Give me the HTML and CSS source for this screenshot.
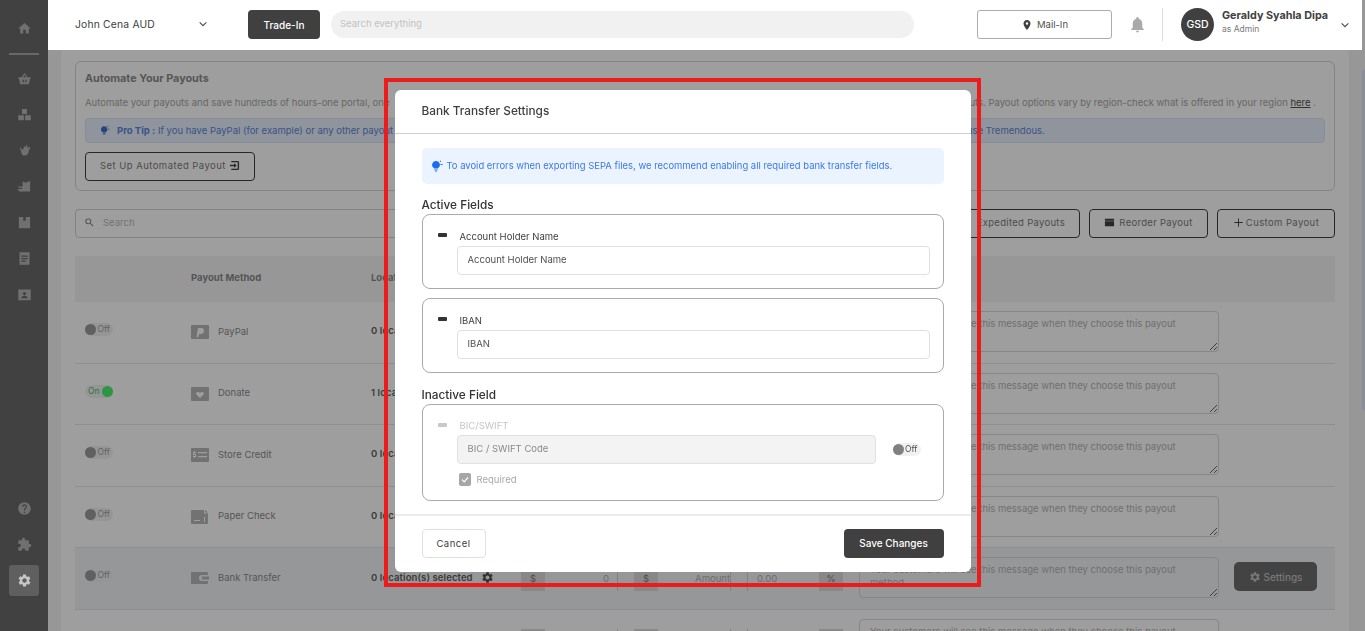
FILE: index.html
```html
<!DOCTYPE html>
<html lang="en">
<head>
    <meta charset="UTF-8">
    <meta name="viewport" content="width=device-width, initial-scale=1.0">
    <title>Payout Settings</title>
    <link rel="stylesheet" href="styles.css">
</head>
<body>
    <svg class="sprite" xmlns="http://www.w3.org/2000/svg">
        <symbol id="i-home" viewBox="0 0 24 24"><path d="M10 20v-6h4v6h5v-8h3L12 3 2 12h3v8z"/></symbol>
        <symbol id="i-basket" viewBox="0 0 24 24"><path d="M12 3 7 10H2v2h1l2 9h14l2-9h1v-2h-5zm0 3 2.500 4h-5zm-3 8h2v4H9zm4 0h2v4h-2z" fill-rule="evenodd"/></symbol>
        <symbol id="i-boxes" viewBox="0 0 24 24"><path d="M8 3h8v8H8zM2 13h9v8H2zM13 13h9v8h-9z"/></symbol>
        <symbol id="i-hand" viewBox="0 0 24 24"><path d="M4 6l5 5 3-6 2 1 1-3 2 1-1 4 4-2 1 2-2 4c0 5-3 8-7 8-3 0-5-2-5-5z"/></symbol>
        <symbol id="i-stock" viewBox="0 0 24 24"><path d="M9 4l5 2 7-3v17H3l2-4h3l-1-4h2zM2 12h5v2H2zM1 16h4v2H1z"/></symbol>
        <symbol id="i-box" viewBox="0 0 24 24"><path d="M3 3h7v6h4V3h7v18H3z"/></symbol>
        <symbol id="i-receipt" viewBox="0 0 24 24"><path d="M4 2h16v20H4zm3 5v2h10V7zm0 4v2h10v-2zm0 4v2h7v-2z" fill-rule="evenodd"/></symbol>
        <symbol id="i-id" viewBox="0 0 24 24"><path d="M2 4h20v17H2zm10 4a2.500 2.500 0 1 0 0 5 2.500 2.500 0 0 0 0-5zm-5 10h10c0-2-2-4-5-4s-5 2-5 4z" fill-rule="evenodd"/></symbol>
        <symbol id="i-help" viewBox="0 0 24 24"><path d="M12 2C6.48 2 2 6.48 2 12s4.48 10 10 10 10-4.48 10-10S17.52 2 12 2zm1 17h-2v-2h2v2zm2.07-7.75l-.9.92C13.45 12.9 13 13.5 13 15h-2v-.5c0-1.1.45-2.1 1.17-2.83l1.24-1.26c.37-.36.59-.86.59-1.41 0-1.1-.9-2-2-2s-2 .9-2 2H8c0-2.21 1.79-4 4-4s4 1.79 4 4c0 .88-.36 1.68-.93 2.25z"/></symbol>
        <symbol id="i-puzzle" viewBox="0 0 24 24"><path d="M20.5 11H19V7c0-1.1-.9-2-2-2h-4V3.5C13 2.12 11.88 1 10.5 1S8 2.12 8 3.5V5H4c-1.1 0-1.99.9-1.99 2v3.8H3.5c1.49 0 2.7 1.21 2.7 2.7s-1.21 2.7-2.7 2.7H2V20c0 1.1.9 2 2 2h3.8v-1.5c0-1.49 1.21-2.7 2.7-2.7 1.49 0 2.7 1.21 2.7 2.7V22H17c1.1 0 2-.9 2-2v-4h1.5c1.38 0 2.5-1.12 2.5-2.5S21.88 11 20.5 11z"/></symbol>
        <symbol id="i-gear" viewBox="0 0 24 24"><path d="M19.14 12.94c.04-.3.06-.61.06-.94 0-.32-.02-.64-.07-.94l2.03-1.58c.18-.14.23-.41.12-.61l-1.92-3.32c-.12-.22-.37-.29-.59-.22l-2.39.96c-.5-.38-1.03-.7-1.62-.94l-.36-2.54c-.04-.24-.24-.41-.48-.41h-3.84c-.24 0-.43.17-.47.41l-.36 2.54c-.59.24-1.13.57-1.62.94l-2.39-.96c-.22-.08-.47 0-.59.22L2.74 8.87c-.12.21-.08.47.12.61l2.03 1.58c-.05.3-.09.63-.09.94s.02.64.07.94l-2.03 1.58c-.18.14-.23.41-.12.61l1.92 3.32c.12.22.37.29.59.22l2.39-.96c.5.38 1.03.7 1.62.94l.36 2.54c.05.24.24.41.48.41h3.84c.24 0 .44-.17.47-.41l.36-2.54c.59-.24 1.13-.56 1.62-.94l2.39.96c.22.08.47 0 .59-.22l1.92-3.32c.12-.22.07-.47-.12-.61l-2.01-1.58zM12 15.6c-1.98 0-3.6-1.62-3.6-3.6s1.62-3.6 3.6-3.6 3.6 1.62 3.6 3.6-1.62 3.6-3.6 3.6z"/></symbol>
        <symbol id="i-pin" viewBox="0 0 24 24"><path d="M12 2C8.13 2 5 5.13 5 9c0 5.25 7 13 7 13s7-7.75 7-13c0-3.87-3.13-7-7-7zm0 9.5a2.5 2.5 0 0 1 0-5 2.5 2.5 0 0 1 0 5z"/></symbol>
        <symbol id="i-bell" viewBox="0 0 24 24"><path d="M12 22c1.1 0 2-.9 2-2h-4c0 1.1.89 2 2 2zm6-6v-5c0-3.07-1.64-5.64-4.5-6.32V4c0-.83-.67-1.5-1.5-1.5s-1.5.67-1.5 1.5v.68C7.63 5.36 6 7.92 6 11v5l-2 2v1h16v-1l-2-2z"/></symbol>
        <symbol id="i-search" viewBox="0 0 24 24"><path d="M15.5 14h-.79l-.28-.27A6.471 6.471 0 0 0 16 9.5 6.5 6.5 0 1 0 9.5 16c1.61 0 3.09-.59 4.23-1.57l.27.28v.79l5 4.99L20.49 19l-4.99-5zm-6 0C7.01 14 5 11.99 5 9.5S7.01 5 9.5 5 14 7.01 14 9.5 11.99 14 9.5 14z"/></symbol>
        <symbol id="i-chev" viewBox="0 0 12 12"><path d="M2 4l4 4 4-4" fill="none" stroke="currentColor" stroke-width="1.4"/></symbol>
        <symbol id="i-bulb" viewBox="0 0 24 24"><path d="M10 3a7.500 7.500 0 0 0-4 14v1h8v-1a7.500 7.500 0 0 0-4-14zM6.500 20h7v1.500h-7zM8 22.500h4V24H8zM19 2l1.500 1-2 2.500-1.300-1zM19 9h4v1.800h-4z"/></symbol>
        <symbol id="i-exit" viewBox="0 0 24 24"><path d="M5 2h14a3 3 0 0 1 3 3v14a3 3 0 0 1-3 3H5v-3h14V5H5zM2 10.500h9V7l6 5-6 5v-3.500H2z"/></symbol>
        <symbol id="i-tray" viewBox="0 0 24 24"><path d="M2 4h20v4H2zM2 9.500h20V20H2z"/></symbol>
        <symbol id="i-plus" viewBox="0 0 24 24"><path d="M11 3h2v8h8v2h-8v8h-2v-8H3v-2h8z"/></symbol>
        <symbol id="m-paypal" viewBox="0 0 18 14"><path d="M0 1a1 1 0 0 1 1-1h16a1 1 0 0 1 1 1v12a1 1 0 0 1-1 1H1a1 1 0 0 1-1-1zm7 2-1.500 9h2l.5-3h2c2 0 3-1.500 3-3.500S11.500 3 10 3z" fill-rule="evenodd"/></symbol>
        <symbol id="m-heart" viewBox="0 0 18 14"><path d="M0 1a1 1 0 0 1 1-1h16a1 1 0 0 1 1 1v12a1 1 0 0 1-1 1H1a1 1 0 0 1-1-1zm9 10 3.500-3.500c1.500-2-1.500-3.500-3.500-1.500-2-2-5-.5-3.500 1.500z" fill-rule="evenodd"/></symbol>
        <symbol id="m-credit" viewBox="0 0 18 14"><path d="M0 1a1 1 0 0 1 1-1h16a1 1 0 0 1 1 1v12a1 1 0 0 1-1 1H1a1 1 0 0 1-1-1zm3 2v1H2v3h2v1H2v1h1v1h1v-1h1V6H3V5h2V4H4V3zm4 1v1.300h9V4zm0 4v1.300h9V8z" fill-rule="evenodd"/></symbol>
        <symbol id="m-check" viewBox="0 0 18 14"><path d="M1 0h12v3.500h4V13a1 1 0 0 1-1 1H1a1 1 0 0 1-1-1V1a1 1 0 0 1 1-1zm13 0 3 2.500h-3zM3 10v1h6v-1zm10-3v5h1V7z" fill-rule="evenodd"/></symbol>
        <symbol id="m-wallet" viewBox="0 0 18 14"><path d="M0 1h16a1 1 0 0 1 1 1v2h-6a3 3 0 0 0 0 6h6v2a1 1 0 0 1-1 1H0zm11 4.500h7v3h-7z"/></symbol>
    </svg>

    <aside class="sidebar">
        <a class="nav-item"><svg class="nav-icon"><use href="#i-home"/></svg></a>
        <div class="nav-sep"></div>
        <a class="nav-item"><svg class="nav-icon"><use href="#i-basket"/></svg></a>
        <a class="nav-item"><svg class="nav-icon"><use href="#i-boxes"/></svg></a>
        <a class="nav-item"><svg class="nav-icon"><use href="#i-hand"/></svg></a>
        <a class="nav-item"><svg class="nav-icon"><use href="#i-stock"/></svg></a>
        <a class="nav-item"><svg class="nav-icon"><use href="#i-box"/></svg></a>
        <a class="nav-item"><svg class="nav-icon"><use href="#i-receipt"/></svg></a>
        <a class="nav-item"><svg class="nav-icon"><use href="#i-id"/></svg></a>
        <div class="nav-bottom">
            <a class="nav-item"><svg class="nav-icon"><use href="#i-help"/></svg></a>
            <a class="nav-item"><svg class="nav-icon"><use href="#i-puzzle"/></svg></a>
            <a class="nav-item nav-active"><span class="nav-active-bg"><svg class="nav-icon"><use href="#i-gear"/></svg></span></a>
        </div>
    </aside>

    <header class="topbar">
        <div class="store-select">
            <span>John Cena AUD</span>
            <svg class="chev"><use href="#i-chev"/></svg>
        </div>
        <button class="trade-btn">Trade-In</button>
        <div class="global-search">Search everything</div>
        <button class="mail-btn"><svg class="pin"><use href="#i-pin"/></svg>Mail-In</button>
        <svg class="bell"><use href="#i-bell"/></svg>
        <div class="top-sep"></div>
        <div class="avatar">GSD</div>
        <div class="user">
            <div class="user-name">Geraldy Syahla Dipa</div>
            <div class="user-role">as Admin</div>
        </div>
        <svg class="chev"><use href="#i-chev"/></svg>
    </header>

    <div class="shell">
        <div class="gutter"></div>
        <main class="content">
            <section class="auto-card">
                <h2 class="auto-title">Automate Your Payouts</h2>
                <p class="auto-desc"><span class="auto-left">Automate your payouts and save hundreds of hours-one portal, one</span><span>payouts. Payout options vary by region-check what is offered in your region <u class="auto-link">here</u> .</span></p>
                <div class="tip">
                    <svg class="tip-icon"><use href="#i-bulb"/></svg>
                    <span class="tip-left"><b>Pro Tip :</b> If you have PayPal (for example) or any other payout</span><span>use Tremendous.</span>
                </div>
                <button class="btn-outline auto-btn">Set Up Automated Payout <svg class="btn-icon"><use href="#i-exit"/></svg></button>
            </section>

            <div class="toolbar">
                <div class="table-search"><svg class="search-icon"><use href="#i-search"/></svg>Search</div>
                <button class="btn-outline btn-exp">Expedited Payouts</button>
                <button class="btn-outline btn-tool"><svg class="btn-icon"><use href="#i-tray"/></svg>Reorder Payout</button>
                <button class="btn-outline btn-tool btn-last"><svg class="btn-icon"><use href="#i-plus"/></svg>Custom Payout</button>
            </div>

            <div class="table">
                <div class="row row-head">
                    <div></div>
                    <div>Payout Method</div>
                    <div>Locations</div>
                </div>

                <div class="row">
                    <div class="toggle"><span class="knob"></span><span>Off</span></div>
                    <div class="method"><svg class="method-icon"><use href="#m-paypal"/></svg>PayPal</div>
                    <div class="locs">0 location(s) selected</div>
                    <div class="fees"><span class="addon">$</span><span class="fee-val">0</span><span class="addon addon-2">$</span><span class="fee-amt">Amount</span><span class="fee-pct">0.00</span><span class="addon">%</span></div>
                    <textarea class="note" placeholder="Your customers will see this message when they choose this payout method"></textarea>
                </div>
                <div class="row">
                    <div class="toggle toggle-on"><span>On</span><span class="knob"></span></div>
                    <div class="method"><svg class="method-icon"><use href="#m-heart"/></svg>Donate</div>
                    <div class="locs">1 location(s) selected</div>
                    <div class="fees"><span class="addon">$</span><span class="fee-val">0</span><span class="addon addon-2">$</span><span class="fee-amt">Amount</span><span class="fee-pct">0.00</span><span class="addon">%</span></div>
                    <textarea class="note" placeholder="Your customers will see this message when they choose this payout method"></textarea>
                </div>
                <div class="row">
                    <div class="toggle"><span class="knob"></span><span>Off</span></div>
                    <div class="method"><svg class="method-icon"><use href="#m-credit"/></svg>Store Credit</div>
                    <div class="locs">0 location(s) selected</div>
                    <div class="fees"><span class="addon">$</span><span class="fee-val">0</span><span class="addon addon-2">$</span><span class="fee-amt">Amount</span><span class="fee-pct">0.00</span><span class="addon">%</span></div>
                    <textarea class="note" placeholder="Your customers will see this message when they choose this payout method"></textarea>
                </div>
                <div class="row">
                    <div class="toggle"><span class="knob"></span><span>Off</span></div>
                    <div class="method"><svg class="method-icon"><use href="#m-check"/></svg>Paper Check</div>
                    <div class="locs">0 location(s) selected</div>
                    <div class="fees"><span class="addon">$</span><span class="fee-val">0</span><span class="addon addon-2">$</span><span class="fee-amt">Amount</span><span class="fee-pct">0.00</span><span class="addon">%</span></div>
                    <textarea class="note" placeholder="Your customers will see this message when they choose this payout method"></textarea>
                </div>
                <div class="row row-active">
                    <div class="toggle"><span class="knob"></span><span>Off</span></div>
                    <div class="method"><svg class="method-icon"><use href="#m-wallet"/></svg>Bank Transfer</div>
                    <div class="locs">0 location(s) selected <svg class="loc-gear"><use href="#i-gear"/></svg></div>
                    <div class="fees"><span class="addon">$</span><span class="fee-val">0</span><span class="addon addon-2">$</span><span class="fee-amt">Amount</span><span class="fee-pct">0.00</span><span class="addon">%</span></div>
                    <textarea class="note" placeholder="Your customers will see this message when they choose this payout method"></textarea>
                    <button class="settings-btn"><svg class="btn-icon"><use href="#i-gear"/></svg>Settings</button>
                </div>
                <div class="row">
                    <div></div>
                    <div></div>
                    <div></div>
                    <div class="fees"><span class="addon">$</span><span class="fee-val">0</span><span class="addon addon-2">$</span><span class="fee-amt">Amount</span><span class="fee-pct">0.00</span><span class="addon">%</span></div>
                    <textarea class="note" placeholder="Your customers will see this message when they choose this payout method"></textarea>
                </div>
            </div>
        </main>
        <div class="scroll-track"><div class="scroll-thumb"></div></div>
    </div>

    <div class="overlay">
        <div class="modal">
            <div class="modal-head">Bank Transfer Settings</div>
            <div class="modal-body">
                <div class="alert"><svg class="alert-icon"><use href="#i-bulb"/></svg>To avoid errors when exporting SEPA files, we recommend enabling all required bank transfer fields.</div>

                <h3 class="group-title">Active Fields</h3>
                <div class="field-box">
                    <div class="grip"></div>
                    <div class="field-main">
                        <label class="field-label">Account Holder Name</label>
                        <input class="field-input" type="text" value="Account Holder Name">
                    </div>
                </div>
                <div class="field-box">
                    <div class="grip"></div>
                    <div class="field-main">
                        <label class="field-label">IBAN</label>
                        <input class="field-input" type="text" value="IBAN">
                    </div>
                </div>

                <h3 class="group-title group-inactive">Inactive Field</h3>
                <div class="field-box box-off">
                    <div class="grip"></div>
                    <div class="field-main">
                        <label class="field-label">BIC/SWIFT</label>
                        <div class="field-line">
                            <input class="field-input" type="text" value="BIC / SWIFT Code" disabled>
                            <div class="toggle modal-toggle"><span class="knob"></span><span>Off</span></div>
                        </div>
                        <div class="req">
                            <span class="req-check"><svg viewBox="0 0 12 12"><path d="M3 6.200 5.200 8.400 9 4" fill="none" stroke="#fff" stroke-width="1.200"/></svg></span>
                            Required
                        </div>
                    </div>
                </div>
            </div>
            <div class="modal-foot">
                <button class="btn-cancel">Cancel</button>
                <button class="btn-save">Save Changes</button>
            </div>
        </div>
    </div>

    <!-- red marker drawn over the dialog in the capture -->
    <div class="marker"></div>
</body>
</html>
```

FILE: styles.css
```css
* {
    box-sizing: border-box;
}

html, body {
    height: 100%;
}

body {
    margin: 0;
    overflow: hidden;
    background: #fff;
    font-family: "Inter", "Open Sans", sans-serif;
    font-size: 10px;
    color: #404040;
}

button, input, textarea {
    font-family: inherit;
}

.sprite {
    display: none;
}

/* sidebar */
.sidebar {
    position: fixed;
    top: 0;
    left: 0;
    bottom: 0;
    z-index: 20;
    width: 48px;
    padding: 10px 0 33px;
    background: #414141;
    display: flex;
    flex-direction: column;
    align-items: center;
}

.nav-item {
    width: 48px;
    height: 36px;
    flex: none;
    display: flex;
    align-items: center;
    justify-content: center;
    color: #707070;
}

.nav-icon {
    width: 15px;
    height: 15px;
    fill: currentColor;
}

.nav-sep {
    width: 30px;
    height: 2px;
    margin: 7px 0 5.5px;
    background: #686868;
    flex: none;
}

.nav-bottom {
    margin-top: auto;
}

.nav-active {
    color: #c6c6c6;
}

.nav-active-bg {
    width: 30px;
    height: 31px;
    border-radius: 3px;
    background: #5f5f5f;
    display: flex;
    align-items: center;
    justify-content: center;
}

/* top bar */
.topbar {
    position: fixed;
    top: 0;
    left: 48px;
    right: 3px;
    z-index: 20;
    height: 50px;
    background: #fff;
    display: flex;
    align-items: center;
    padding: 0 0 1px 27px;
}

.store-select {
    width: 173px;
    display: flex;
    justify-content: space-between;
    align-items: center;
    padding-right: 40px;
    padding-bottom: 1px;
    font-size: 10.3px;
    letter-spacing: .2px;
}

.chev {
    width: 10px;
    height: 10px;
    color: #505050;
}

.trade-btn {
    width: 72px;
    height: 29px;
    border: 0;
    border-radius: 4px;
    background: #404040;
    color: #fff;
    font-size: 10px;
    font-weight: 500;
}

.global-search {
    width: 583px;
    height: 27px;
    margin-left: 11px;
    padding-left: 9px;
    border-radius: 14px;
    background: #f1f1f1;
    color: #c2c2c2;
    font-size: 9.5px;
    line-height: 26px;
}

.mail-btn {
    width: 135px;
    height: 29px;
    margin-left: 63px;
    border: 1px solid #ababab;
    border-radius: 3px;
    background: #fff;
    color: #505050;
    font-size: 9.5px;
    display: flex;
    align-items: center;
    justify-content: center;
    gap: 4px;
}

.pin {
    width: 12px;
    height: 12px;
    fill: #404040;
}

.bell {
    width: 19px;
    height: 19px;
    margin-left: 16px;
    fill: #a9a9a9;
}

.top-sep {
    width: 1px;
    height: 33px;
    margin-left: 15px;
    background: #ddd;
}

.avatar {
    width: 33px;
    height: 33px;
    margin-left: 18px;
    border-radius: 50%;
    background: #404040;
    color: #fff;
    font-size: 10.5px;
    font-weight: 500;
    display: flex;
    align-items: center;
    justify-content: center;
}

.user {
    margin: -5px 0 0 8px;
    width: 118px;
}

.user-name {
    font-size: 10.8px;
    font-weight: 700;
    line-height: 14px;
}

.user-role {
    font-size: 8.5px;
    line-height: 12px;
    color: #7a7a7a;
}

/* page behind the dialog */
.shell {
    height: 100%;
    padding-left: 48px;
    display: flex;
}

.gutter {
    width: 13px;
    flex: none;
    background: #f4f4f4;
}

.content {
    flex: 1;
    min-width: 0;
    padding: 61px 14px 0;
}

.scroll-track {
    width: 16px;
    flex: none;
    background: #f4f4f4;
    display: flex;
    justify-content: flex-end;
    padding-top: 70px;
}

.scroll-thumb {
    width: 3px;
    height: 340px;
    background: #dfe5f2;
}

.auto-card {
    height: 130px;
    padding: 10px 9px;
    border: 1px solid #d6d6d6;
    border-radius: 6px;
}

.auto-title {
    margin: 0;
    font-size: 10.8px;
    line-height: 14px;
    font-weight: 700;
    color: #8c8c8c;
}

.auto-desc {
    margin: 10px 0 0;
    font-size: 9.5px;
    line-height: 14px;
    white-space: nowrap;
    color: #a6a6a6;
    display: flex;
    justify-content: space-between;
    padding-right: 9px;
}

.auto-link {
    color: #505050;
}

.tip {
    height: 25px;
    margin-top: 8px;
    padding: 0 0 1px 14px;
    border: 1px solid #d8e4f8;
    border-radius: 4px;
    background: #e9f1fe;
    color: #5b86d6;
    font-size: 9.5px;
    display: flex;
    align-items: center;
    white-space: nowrap;
}

.tip-icon {
    width: 10px;
    height: 10px;
    margin-right: 7px;
    fill: #3b6fcf;
}

.tip-left {
    width: 850px;
}

.btn-outline {
    height: 29px;
    padding-bottom: 4px;
    border: 1px solid #404040;
    border-radius: 4px;
    background: transparent;
    color: #7c7c7c;
    font-size: 9.5px;
    letter-spacing: .3px;
    white-space: nowrap;
}

.btn-icon {
    width: 11px;
    height: 11px;
    fill: #404040;
    vertical-align: -2px;
}

.auto-btn {
    display: block;
    width: 170px;
    margin-top: 9px;
    letter-spacing: .45px;
}

.toolbar {
    margin-top: 18px;
    display: flex;
    gap: 9px;
}

.table-search {
    flex: 1;
    height: 29px;
    padding: 0 0 2px 8px;
    border: 1px solid #d2d2d2;
    border-radius: 4px;
    color: #bababa;
    font-size: 9.5px;
    display: flex;
    align-items: center;
}

.search-icon {
    width: 11px;
    height: 11px;
    margin-right: 8px;
    fill: #707070;
}

.btn-exp {
    width: 130px;
    text-align: right;
    padding-right: 14px;
}

.btn-tool {
    width: 119px;
}

.btn-tool .btn-icon {
    margin-right: 4px;
}

.btn-last {
    width: 118px;
    letter-spacing: .4px;
}

.btn-last .btn-icon {
    margin-right: 2px;
}

.table {
    margin-top: 18px;
}

.row {
    height: 61.5px;
    display: grid;
    grid-template-columns: 116px 180px 150px 338px 375px 101px;
    align-items: start;
    border-bottom: 1px solid #e4e6ea;
}

.row-head {
    height: 46px;
    padding-bottom: 4px;
    background: #f4f4f4;
    border-bottom: 0;
    align-items: center;
    font-size: 9.5px;
    font-weight: 700;
    color: #8a8a8a;
}

.row-active {
    background: #f3f4f6;
}

.toggle {
    width: 28px;
    height: 13px;
    margin: 21px 0 0 10px;
    border-radius: 7px;
    background: #f1f1f1;
    color: #a0a0a0;
    font-size: 8.5px;
    line-height: 13px;
    display: flex;
    align-items: center;
    justify-content: space-between;
    padding-right: 3px;
}

.knob {
    width: 11px;
    height: 11px;
    border-radius: 50%;
    background: #9c9c9c;
}

.toggle-on {
    color: #4ac06a;
    padding: 0 0 0 3px;
}

.toggle-on .knob {
    background: #4af06f;
}

.method {
    margin-top: 22px;
    font-size: 9.5px;
    color: #8c8c8c;
    display: flex;
    align-items: center;
    gap: 9px;
}

.method-icon {
    width: 18px;
    height: 14px;
    fill: #b8b8b8;
    transform: translateY(1px);
}

.locs {
    margin-top: 23px;
    font-size: 9.5px;
    font-weight: 600;
    letter-spacing: .1px;
    color: #606060;
    white-space: nowrap;
    display: flex;
    align-items: center;
    gap: 8px;
}

.loc-gear {
    width: 13px;
    height: 13px;
    fill: #505050;
}

.fees {
    margin-top: 19px;
    height: 24px;
    width: 323px;
    display: flex;
    align-items: center;
    font-size: 9.5px;
    color: #b0b0b0;
}

.fees span {
    flex: none;
}

.addon {
    width: 24px;
    height: 24px;
    background: #dcdcdc;
    color: #808080;
    line-height: 24px;
    text-align: center;
}

.fee-val {
    width: 73px;
    height: 24px;
    padding-right: 8px;
    text-align: right;
    line-height: 24px;
    border-right: 1px solid #d0d0d0;
}

.addon-2 {
    margin-left: 16px;
}

.fee-amt {
    width: 73px;
    height: 24px;
    text-align: right;
    line-height: 24px;
    border-right: 1px solid #d0d0d0;
}

.fee-pct {
    width: 72px;
    margin-left: 16px;
    padding-left: 9px;
    height: 24px;
    line-height: 24px;
    border-left: 1px solid #d0d0d0;
}

.note {
    width: 360px;
    height: 41px;
    margin-top: 9px;
    padding: 5px 10px;
    border: 1px solid #d8d8d8;
    border-radius: 4px;
    background: transparent;
    font-size: 9.5px;
    line-height: 13px;
}

.note::placeholder {
    color: #b4b4b4;
}

.settings-btn {
    width: 83px;
    height: 29px;
    margin-top: 14px;
    border: 0;
    border-radius: 5px;
    background: #6c6c6c;
    color: #c2c2c2;
    font-size: 10px;
    font-weight: 500;
}

.settings-btn .btn-icon {
    width: 12px;
    height: 12px;
    fill: #c2c2c2;
    margin-right: 3px;
}

/* dialog */
.overlay {
    position: fixed;
    inset: 0;
    z-index: 10;
    background: rgba(0, 0, 0, .38);
}

.modal {
    width: 576px;
    height: 482px;
    margin: 90px auto 0;
    border-radius: 6px;
    background: #fff;
    display: flex;
    flex-direction: column;
    overflow: hidden;
}

.modal-head {
    height: 44px;
    flex: none;
    padding-left: 27px;
    border-bottom: 1px solid #d0d0d0;
    font-size: 11.8px;
    font-weight: 500;
    line-height: 43px;
    color: #404040;
}

.modal-body {
    flex: 1;
    min-height: 0;
    overflow: hidden;
    padding: 14px 27px 0;
}

.alert {
    height: 36px;
    padding: 0 0 2px 9px;
    border-radius: 5px;
    background: #ebf3fe;
    color: #3a78ee;
    font-size: 9.45px;
    display: flex;
    align-items: center;
}

.alert-icon {
    width: 12px;
    height: 13px;
    margin-right: 4px;
    fill: #1a6cf0;
}

.group-title {
    margin: 11px 0 -1px;
    font-size: 11.8px;
    font-weight: 500;
    line-height: 20px;
    color: #333;
}

.group-inactive {
    margin-top: 12px;
}

.field-box {
    height: 75px;
    margin-bottom: 9px;
    padding: 15px 13px 0 15px;
    border: 1px solid #aaa;
    border-radius: 8px;
    display: flex;
}

.grip {
    width: 9px;
    height: 4px;
    margin-top: 3px;
    flex: none;
    border-radius: 1px;
    background: #333;
}

.field-main {
    flex: 1;
    margin-left: 10px;
}

.field-label {
    display: block;
    padding: 0 0 2px 3px;
    font-size: 9.5px;
    line-height: 14px;
    color: #404040;
}

.field-input {
    display: block;
    width: 100%;
    height: 29px;
    padding: 0 10px 2px;
    border: 1px solid #e0e0e0;
    border-radius: 4px;
    background: #fff;
    color: #505050;
    font-size: 9.5px;
}

.box-off {
    height: 97px;
    padding-top: 14px;
}

.box-off .grip {
    background: #c8c8c8;
    margin-top: 4px;
}

.box-off .field-label {
    color: #c4c4c4;
}

.field-line {
    display: flex;
    align-items: center;
    gap: 17px;
    padding-right: 9px;
}

.box-off .field-input {
    flex: 1;
    background: #f3f3f3;
    color: #8a8a8a;
}

.modal-toggle {
    flex: none;
    margin: 0;
    color: #505050;
}

.modal-toggle .knob {
    background: #808080;
}

.req {
    margin-top: 9px;
    padding-left: 2px;
    display: flex;
    align-items: center;
    gap: 6px;
    font-size: 9.5px;
    color: #a8a8a8;
}

.req-check {
    width: 12px;
    height: 13px;
    border-radius: 2px;
    background: #a6a6a6;
    display: flex;
}

.modal-foot {
    height: 58px;
    flex: none;
    padding: 13px 27px;
    border-top: 2px solid #ececec;
    display: flex;
    justify-content: space-between;
}

.btn-cancel {
    width: 64px;
    height: 29px;
    padding-bottom: 2px;
    border: 1px solid #e0e0e0;
    border-radius: 4px;
    background: #fff;
    color: #404040;
    font-size: 9.5px;
    letter-spacing: .5px;
}

.btn-save {
    width: 100px;
    height: 29px;
    padding-bottom: 2px;
    border: 0;
    border-radius: 4px;
    background: #404040;
    color: #fff;
    font-size: 10px;
    font-weight: 500;
}

/* annotation */
.marker {
    position: fixed;
    top: 78px;
    left: 384px;
    width: 597px;
    height: 509px;
    z-index: 30;
    border: 4px solid #ec1c1c;
    pointer-events: none;
}
```
